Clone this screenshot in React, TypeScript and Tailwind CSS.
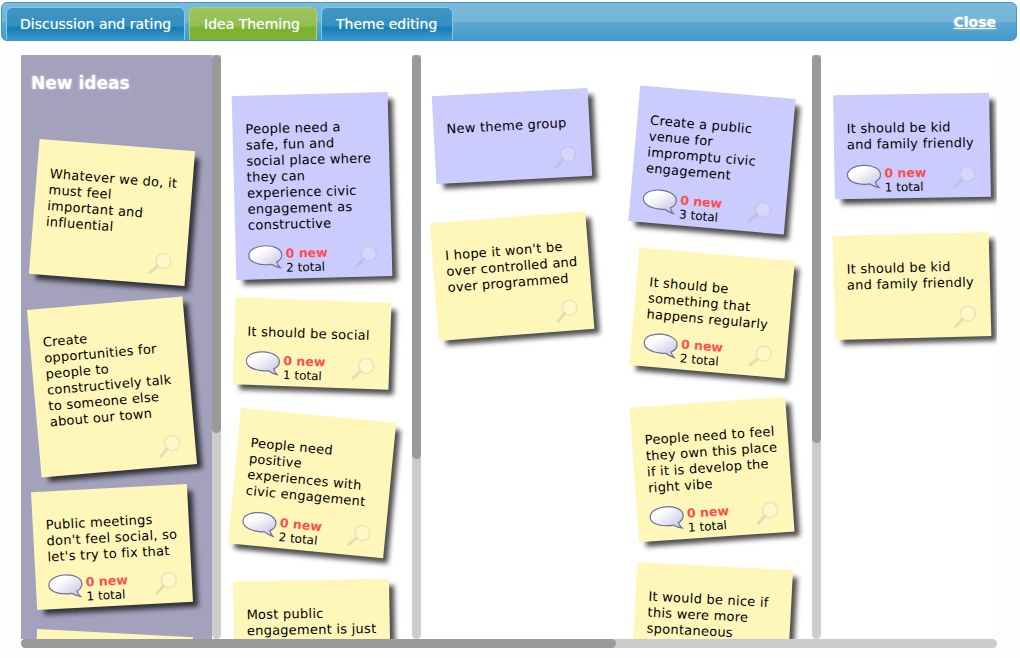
import React from "react";

function Bubble() {
  return (
    <svg width="36" height="27" viewBox="0 0 36 26" className="shrink-0 -mt-[2px]">
      <defs>
        <linearGradient id="bub" x1="0" y1="0" x2="1" y2="1">
          <stop offset="0.3" stopColor="#ffffff" />
          <stop offset="1" stopColor="#bfbee0" />
        </linearGradient>
      </defs>
      <path
        d="M1 10.5C1 5 8 1 17.5 1S34 5 34 10.5c0 3.2-2 5.6-5.2 7.2.3 2 1.5 4 3.4 5.6-3.6-.6-6.6-2-8.8-3.6-1.8.3-3.6.4-5.2.3C8 19.8 1 16 1 10.5Z"
        fill="url(#bub)"
        stroke="#6f6e9c"
        strokeWidth="1.2"
      />
    </svg>
  );
}

function Magnifier() {
  return (
    <svg width="24" height="24" viewBox="0 0 24 24" className="shrink-0 mb-[5px] opacity-35 blur-[0.3px]">
      <circle cx="15" cy="9" r="7.5" fill="#ffffff" fillOpacity="0.6" stroke="#a9b3b8" strokeWidth="1.2" />
      <path d="M9.5 14.5 2.5 21.5" stroke="#a9aaa0" strokeWidth="2.8" strokeLinecap="round" />
    </svg>
  );
}

type NoteProps = {
  lines?: string[];
  cls: string;
  count?: number;
  purple?: boolean;
};

function Note({ lines = [], cls, count, purple }: NoteProps) {
  return (
    <div
      className={`w-[156px] shrink-0 flex flex-col pl-[13px] pr-[14px] pt-[26px] pb-[3px] text-[13px] leading-[16px] text-black shadow-[6px_6px_5px_-1px_rgba(0,0,0,0.7)] ${
        purple ? "bg-[#cbcbfe]" : "bg-[#fff7ba]"
      } ${cls}`}
    >
      <div className="whitespace-nowrap tracking-[0.25px]">
        {lines.map((l) => (
          <div key={l}>{l}</div>
        ))}
      </div>
      <div className="mt-auto flex items-end justify-between">
        {count !== undefined ? (
          <div className="flex items-start gap-[2px] -ml-[1px]">
            <Bubble />
            <div className="text-[12px] leading-[15px]">
              <div className="font-bold text-[12.5px] text-[#ff4d4d]">0 new</div>
              <div>{count} total</div>
            </div>
          </div>
        ) : (
          <span />
        )}
        <Magnifier />
      </div>
    </div>
  );
}

function VBar({ cls }: { cls: string }) {
  return (
    <div className="w-[9px] h-full shrink-0 bg-[#cccccc] rounded-b-[5px] overflow-hidden">
      <div className={`w-full bg-[#999999] rounded-[5px] ${cls}`} />
    </div>
  );
}

export default function App() {
  return (
    <div
      className="w-[1020px] h-[658px] overflow-hidden bg-[#fdfefe] pt-[2px]"
      style={{ fontFamily: '"DejaVu Sans", Verdana, sans-serif' }}
    >
      <header className="mx-[1px] w-[1016px] h-[39px] rounded-[6px] border border-[#4a90cf] bg-[linear-gradient(#7abada_0%,#74b5d7_50%,#5ba9d3_53%,#419acc_100%)] flex items-end justify-between pl-[4px] pr-[20px] overflow-hidden">
        <nav className="flex gap-[4px] h-[33px]">
          <div className="w-[179px] pl-[13px] rounded-t-[6px] border border-b-0 border-[#7fcbef] bg-[linear-gradient(#3e96c3_0%,#3590c0_55%,#177bb4_62%,#3f9bcc_100%)] text-white text-[14px] leading-[32px] whitespace-nowrap [text-shadow:0_0_1px_rgba(255,255,255,0.5)]">
            Discussion and rating
          </div>
          <div className="w-[128px] pl-[14px] rounded-t-[6px] border border-b-0 border-[#a9d46a] bg-[linear-gradient(#9cc35f_0%,#94bf52_55%,#7cb12e_62%,#80b434_100%)] text-white text-[14px] leading-[32px] whitespace-nowrap [text-shadow:0_0_1px_rgba(255,255,255,0.5)]">
            Idea Theming
          </div>
          <div className="w-[132px] pl-[14px] rounded-t-[6px] border border-b-0 border-[#7fcbef] bg-[linear-gradient(#3e96c3_0%,#3590c0_55%,#177bb4_62%,#3f9bcc_100%)] text-white text-[14px] leading-[32px] whitespace-nowrap [text-shadow:0_0_1px_rgba(255,255,255,0.5)]">
            Theme editing
          </div>
        </nav>
        <a className="self-start mt-[10px] text-white font-bold underline text-[14px] leading-[18px] [text-shadow:0_0_2px_rgba(255,255,255,0.6)]">
          Close
        </a>
      </header>

      <main className="ml-[21px] mt-[14px] w-[976px] bg-white">
        <div className="flex h-[584px]">
          <section className="w-[191px] bg-[#a3a1bc] overflow-hidden pl-[13px] flex flex-col shrink-0">
            <h2 className="h-[90px] shrink-0 -ml-[3px] pt-[17px] text-[17px] leading-[22px] font-bold text-white [text-shadow:0_0_3px_rgba(255,255,255,0.6)]">
              New ideas
            </h2>
            <Note cls="h-[135px] rotate-[4.5deg]" lines={["Whatever we do, it", "must feel", "important and", "influential"]} />
            <Note cls="mt-[23px] h-[168px] -rotate-[5deg]" lines={["Create", "opportunities for", "people to", "constructively talk", "to someone else", "about our town"]} />
            <Note cls="mt-[17px] h-[118px] -rotate-[3deg]" count={1} lines={["Public meetings", "don't feel social, so", "let's try to fix that"]} />
            <Note cls="mt-[27px] h-[118px] rotate-[3deg]" />
          </section>
          <VBar cls="h-[378px]" />

          <section className="w-[191px] overflow-hidden pl-[13px] flex flex-col shrink-0">
            <Note purple cls="mt-[39px] h-[184px] -rotate-[1.5deg]" count={2} lines={["People need a", "safe, fun and", "social place where", "they can", "experience civic", "engagement as", "constructive"]} />
            <Note cls="mt-[22px] h-[87px] rotate-[2deg]" count={1} lines={["It should be social"]} />
            <Note cls="mt-[28px] h-[136px] rotate-[5.5deg]" count={2} lines={["People need", "positive", "experiences with", "civic engagement"]} />
            <Note cls="mt-[29px] h-[118px] -rotate-[1deg]" lines={["Most public", "engagement is just"]} />
          </section>
          <VBar cls="h-[404px]" />

          <section className="w-[391px] overflow-hidden flex shrink-0">
            <div className="w-[200px] pl-[13px] flex flex-col shrink-0">
              <Note purple cls="mt-[37px] h-[88px] -rotate-[3deg]" lines={["New theme group"]} />
              <Note cls="mt-[37px] h-[118px] -rotate-[4.5deg]" lines={["I hope it won't be", "over controlled and", "over programmed"]} />
            </div>
            <div className="w-[191px] pl-[13px] flex flex-col shrink-0">
              <Note purple cls="mt-[37px] h-[136px] rotate-[5deg]" count={3} lines={["Create a public", "venue for", "impromptu civic", "engagement"]} />
              <Note cls="mt-[26px] h-[118px] rotate-[5deg]" count={2} lines={["It should be", "something that", "happens regularly"]} />
              <Note cls="mt-[30px] h-[135px] -rotate-[4deg]" count={1} lines={["People need to feel", "they own this place", "if it is develop the", "right vibe"]} />
              <Note cls="mt-[29px] h-[118px] rotate-[3deg]" lines={["It would be nice if", "this were more", "spontaneous"]} />
            </div>
          </section>
          <VBar cls="h-[388px]" />

          <section className="flex-1 overflow-hidden pl-[13px] flex flex-col">
            <Note purple cls="mt-[39px] h-[104px] -rotate-[1deg]" count={1} lines={["It should be kid", "and family friendly"]} />
            <Note cls="mt-[36px] h-[104px] -rotate-[1.5deg]" lines={["It should be kid", "and family friendly"]} />
          </section>
        </div>
        <div className="h-[9px] bg-[#cccccc] rounded-[5px]">
          <div className="h-full w-[595px] bg-[#999999] rounded-[5px]" />
        </div>
      </main>
    </div>
  );
}
